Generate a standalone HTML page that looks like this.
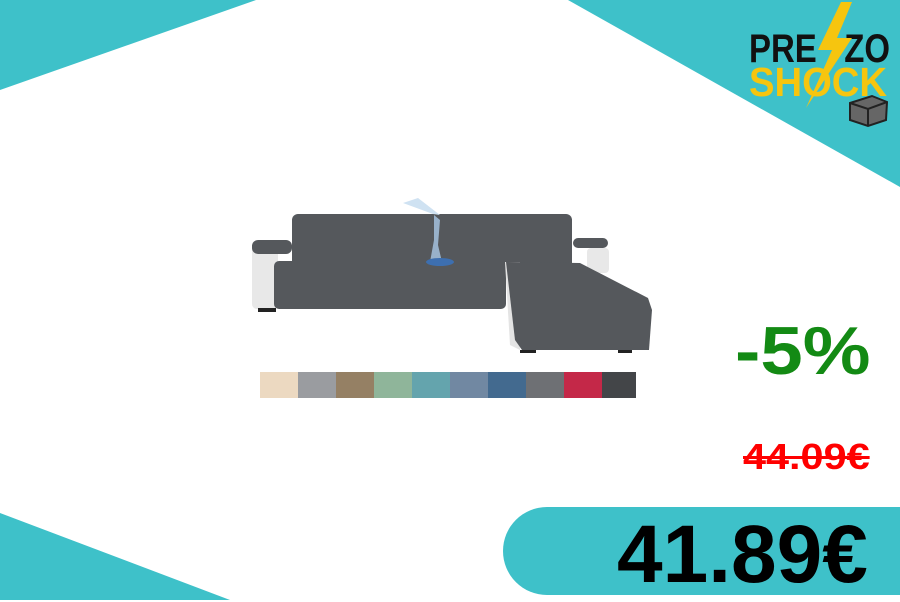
<!DOCTYPE html>
<html><head><style>
body{margin:0;width:900px;height:600px;overflow:hidden;background:#fff;position:relative;font-family:"Liberation Sans",sans-serif}
.a{position:absolute;transform-origin:0 0;white-space:nowrap;font-weight:bold}
</style></head><body>
<svg class="a" style="left:0;top:0" width="900" height="600">
<polygon points="0,0 256,0 0,90" fill="#3ec1c9"/>
<polygon points="568,0 900,0 900,187" fill="#3ec1c9"/>
<polygon points="0,513 230,600 0,600" fill="#3ec1c9"/>
<rect x="503" y="507" width="440" height="88" rx="44" fill="#3ec1c9"/>
<!-- sofa -->
<rect x="292" y="214" width="280" height="56" rx="6" fill="#55585c"/>
<rect x="252" y="243" width="26" height="66" rx="5" fill="#e8e8e8"/>
<rect x="252" y="240" width="40" height="14" rx="6" fill="#55585c"/>
<rect x="573" y="238" width="35" height="10" rx="5" fill="#55585c"/>
<rect x="587" y="248" width="22" height="25" rx="4" fill="#e8e8e8"/>
<rect x="274" y="261" width="232" height="48" rx="5" fill="#55585c"/>
<polygon points="505,262 520,262 520,350 510,345" fill="#e4e4e4"/>
<path d="M506,262 L580,263 L648,298 L652,310 L649,350 L522,350 L515,340 Z" fill="#55585c"/>
<rect x="258" y="308" width="18" height="4" fill="#222"/>
<rect x="520" y="350" width="16" height="3" fill="#222"/>
<rect x="618" y="350" width="14" height="3" fill="#222"/>
<path d="M403,203 L418,198 L440,215 L433,214 Z" fill="#cfe2f2"/>
<path d="M434,215 L440,220 L438,245 L442,262 L430,262 L434,240 Z" fill="#a9c8e6" opacity="0.8"/>
<ellipse cx="440" cy="262" rx="14" ry="4" fill="#3d6fb0"/>
<!-- swatches -->
<rect x="260" y="372" width="38" height="26" fill="#ecd9c1"/>
<rect x="298" y="372" width="38" height="26" fill="#9a9ca0"/>
<rect x="336" y="372" width="38" height="26" fill="#958064"/>
<rect x="374" y="372" width="38" height="26" fill="#8fb59a"/>
<rect x="412" y="372" width="38" height="26" fill="#64a4ad"/>
<rect x="450" y="372" width="38" height="26" fill="#7188a2"/>
<rect x="488" y="372" width="38" height="26" fill="#436a8f"/>
<rect x="526" y="372" width="38" height="26" fill="#6e7074"/>
<rect x="564" y="372" width="38" height="26" fill="#c42848"/>
<rect x="602" y="372" width="34" height="26" fill="#434548"/>
<!-- logo -->
<text x="749" y="62" font-family="Liberation Sans" font-weight="bold" font-size="40" fill="#111" textLength="141" lengthAdjust="spacingAndGlyphs">PRE&#160;&#160;&#160;ZO</text>
<text x="749" y="96" font-family="Liberation Sans" font-weight="bold" font-size="41" fill="#f6c50f" textLength="138" lengthAdjust="spacingAndGlyphs">SHOCK</text>
<polygon points="841,2 818,50 832,50 806,108 852,38 837,38 852,2" fill="#f6c50f"/>
<polygon points="850,103 872,96 887,102 886,120 868,126 850,120" fill="#666" stroke="#222" stroke-width="2"/>
<path d="M850,103 L868,109 L887,102 M868,109 L868,126" stroke="#222" stroke-width="2" fill="none"/>
</svg>
<div class="a" style="left:735px;top:312px;font-size:68px;color:#138a14;transform:scaleX(1.12)">-5%</div>
<div class="a" style="left:743px;top:436px;font-size:36px;color:#f00;text-decoration:line-through;transform:scaleX(1.15)">44.09€</div>
<div class="a" style="left:617px;top:508px;font-size:82px;color:#000;transform:scaleX(1.0)">41.89€</div>
</body></html>
